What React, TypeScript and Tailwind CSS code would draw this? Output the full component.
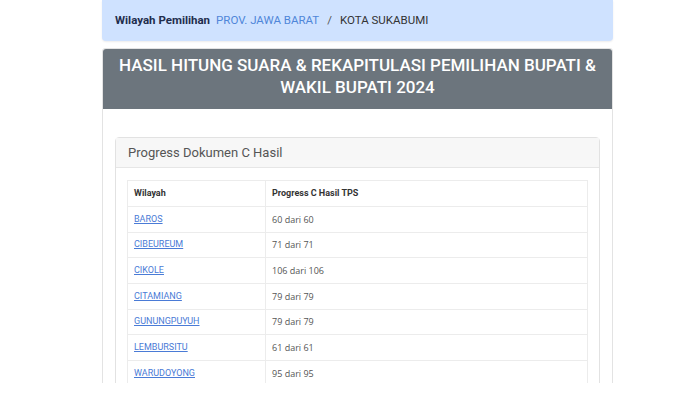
import React from 'react';

const rows = [
    { name: 'BAROS', progress: '60 dari 60' },
    { name: 'CIBEUREUM', progress: '71 dari 71' },
    { name: 'CIKOLE', progress: '106 dari 106' },
    { name: 'CITAMIANG', progress: '79 dari 79' },
    { name: 'GUNUNGPUYUH', progress: '79 dari 79' },
    { name: 'LEMBURSITU', progress: '61 dari 61' },
    { name: 'WARUDOYONG', progress: '95 dari 95' },
];

const App = () => {
    return (
        <div className="w-[700px] h-[393px] bg-white font-['Roboto',sans-serif]">
            <div className="h-[383px] overflow-hidden">
                <div className="ml-[102px] w-[511px]">
                    {/* breadcrumb */}
                    <div className="h-[41px] bg-[#cfe2ff] rounded-b-[4px] shadow-[0_1px_2px_rgba(0,0,0,0.08)] px-[13px] flex items-center gap-[6px] text-[11.5px]">
                        <span className="font-bold text-[#1f2d4d]">Wilayah Pemilihan</span>
                        <span className="text-[#4f86d9]">PROV. JAWA BARAT</span>
                        <span className="text-[#555] px-[2px]">/</span>
                        <span className="text-[#333]">KOTA SUKABUMI</span>
                    </div>

                    {/* main card */}
                    <div className="mt-[7px] border border-[#e3e3e3] rounded-t-[3px]">
                        <div className="bg-[#6c757d] text-white text-center font-medium text-[17px] leading-[22px] pt-[5px] pb-[11px] px-[8px] rounded-t-[3px]">
                            HASIL HITUNG SUARA &amp; REKAPITULASI PEMILIHAN BUPATI &amp; WAKIL BUPATI 2024
                        </div>

                        <div className="pt-[28px] px-[12px] pb-[12px]">
                            <div className="border border-[#e2e2e2] rounded-[4px]">
                                <div className="h-[30px] bg-[#f7f7f7] border-b border-[#e6e6e6] px-[12px] flex items-center text-[13px] text-[#555]">
                                    Progress Dokumen C Hasil
                                </div>
                                <div className="pt-[12px] px-[11px] pb-[10px]">
                                    <table className="w-full border-collapse border border-[#ececec] text-[9px]">
                                        <thead>
                                            <tr className="h-[26px]">
                                                <th className="w-[138px] text-left font-bold text-[#333] px-[6px] border border-[#ececec]">Wilayah</th>
                                                <th className="text-left font-bold text-[#333] px-[6px] border border-[#ececec]">Progress C Hasil TPS</th>
                                            </tr>
                                        </thead>
                                        <tbody>
                                            {rows.map(r => (
                                                <tr key={r.name} className="h-[25.7px]">
                                                    <td className="px-[6px] border border-[#ececec]">
                                                        <a href="#" className="text-[#4a7bd6] underline">{r.name}</a>
                                                    </td>
                                                    <td className="px-[6px] border border-[#ececec] text-[#555] font-['Open_Sans',sans-serif]">{r.progress}</td>
                                                </tr>
                                            ))}
                                        </tbody>
                                    </table>
                                </div>
                            </div>
                        </div>
                    </div>
                </div>
            </div>
        </div>
    );
};

export default App;
